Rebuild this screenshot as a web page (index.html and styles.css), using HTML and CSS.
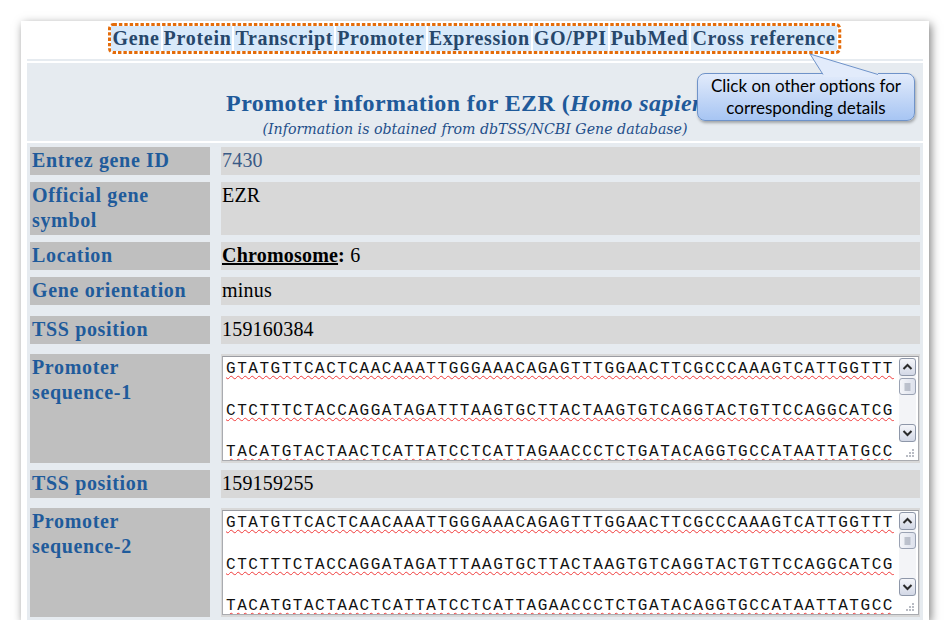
FILE: index.html
```html
<!DOCTYPE html>
<html>
<head>
<meta charset="utf-8">
<link rel="stylesheet" href="styles.css">
</head>
<body>
<div class="panel">
  <div class="navrow">
    <div class="nav">
      <svg class="nav-border" xmlns="http://www.w3.org/2000/svg"><rect rx="4" ry="4"></rect></svg>
      <a class="nav-link">Gene</a>
      <a class="nav-link">Protein</a>
      <a class="nav-link">Transcript</a>
      <a class="nav-link">Promoter</a>
      <a class="nav-link">Expression</a>
      <a class="nav-link">GO/PPI</a>
      <a class="nav-link">PubMed</a>
      <a class="nav-link">Cross reference</a>
    </div>
  </div>
  <div class="rule"></div>
  <div class="head">
    <h1 class="title">Promoter information for EZR (<i>Homo sapiens</i>)</h1>
    <p class="sub">(Information is obtained from dbTSS/NCBI Gene database)</p>
  </div>
  <div class="table">
    <div class="row">
      <div class="lab">Entrez gene ID</div>
      <div class="val val-link">7430</div>
    </div>
    <div class="row">
      <div class="lab">Official gene<br>symbol</div>
      <div class="val">EZR</div>
    </div>
    <div class="row">
      <div class="lab">Location</div>
      <div class="val"><b class="chrom">Chromosome</b><b>:</b> 6</div>
    </div>
    <div class="row">
      <div class="lab">Gene orientation</div>
      <div class="val">minus</div>
    </div>
    <div class="row row-gap11">
      <div class="lab">TSS position</div>
      <div class="val">159160384</div>
    </div>
    <div class="row row-gap10">
      <div class="lab">Promoter<br>sequence-1</div>
      <div class="val val-seq">
        <div class="ta">
          <div class="ta-text">
            <div class="ta-line">GTATGTTCACTCAACAAATTGGGAAACAGAGTTTGGAACTTCGCCCAAAGTCATTGGTTT</div>
            <div class="ta-line">CTCTTTCTACCAGGATAGATTTAAGTGCTTACTAAGTGTCAGGTACTGTTCCAGGCATCG</div>
            <div class="ta-line">TACATGTACTAACTCATTATCCTCATTAGAACCCTCTGATACAGGTGCCATAATTATGCC</div>
          </div>
          <div class="sb">
            <div class="sb-btn"><svg width="15" height="16" viewBox="0 0 15 16"><polyline points="3.5,10 7.5,6 11.5,10" fill="none" stroke="#2b2b2b" stroke-width="2"/></svg></div>
            <div class="sb-thumb"><svg width="15" height="15" viewBox="0 0 15 15"><path d="M4.5 5h6M4.5 7h6M4.5 9h6M4.5 11h6" stroke="#8e96a6" stroke-width="1"/></svg></div>
            <div class="sb-track"></div>
            <div class="sb-btn"><svg width="15" height="16" viewBox="0 0 15 16"><polyline points="3.5,6 7.5,10 11.5,6" fill="none" stroke="#2b2b2b" stroke-width="2"/></svg></div>
            <div class="sb-grip"><svg width="17" height="18" viewBox="0 0 17 18"><g fill="#b9bcc4"><rect x="13" y="6" width="2" height="2"/><rect x="10" y="9" width="2" height="2"/><rect x="13" y="9" width="2" height="2"/><rect x="7" y="12" width="2" height="2"/><rect x="10" y="12" width="2" height="2"/><rect x="13" y="12" width="2" height="2"/></g></svg></div>
          </div>
        </div>
      </div>
    </div>
    <div class="row">
      <div class="lab">TSS position</div>
      <div class="val">159159255</div>
    </div>
    <div class="row row-gap10">
      <div class="lab">Promoter<br>sequence-2</div>
      <div class="val val-seq">
        <div class="ta">
          <div class="ta-text">
            <div class="ta-line">GTATGTTCACTCAACAAATTGGGAAACAGAGTTTGGAACTTCGCCCAAAGTCATTGGTTT</div>
            <div class="ta-line">CTCTTTCTACCAGGATAGATTTAAGTGCTTACTAAGTGTCAGGTACTGTTCCAGGCATCG</div>
            <div class="ta-line">TACATGTACTAACTCATTATCCTCATTAGAACCCTCTGATACAGGTGCCATAATTATGCC</div>
          </div>
          <div class="sb">
            <div class="sb-btn"><svg width="15" height="16" viewBox="0 0 15 16"><polyline points="3.5,10 7.5,6 11.5,10" fill="none" stroke="#2b2b2b" stroke-width="2"/></svg></div>
            <div class="sb-thumb"><svg width="15" height="15" viewBox="0 0 15 15"><path d="M4.5 5h6M4.5 7h6M4.5 9h6M4.5 11h6" stroke="#8e96a6" stroke-width="1"/></svg></div>
            <div class="sb-track"></div>
            <div class="sb-btn"><svg width="15" height="16" viewBox="0 0 15 16"><polyline points="3.5,6 7.5,10 11.5,6" fill="none" stroke="#2b2b2b" stroke-width="2"/></svg></div>
            <div class="sb-grip"><svg width="17" height="18" viewBox="0 0 17 18"><g fill="#b9bcc4"><rect x="13" y="6" width="2" height="2"/><rect x="10" y="9" width="2" height="2"/><rect x="13" y="9" width="2" height="2"/><rect x="7" y="12" width="2" height="2"/><rect x="10" y="12" width="2" height="2"/><rect x="13" y="12" width="2" height="2"/></g></svg></div>
          </div>
        </div>
      </div>
    </div>
  </div>
  <div class="callout">
    <svg class="callout-tail" width="75" height="24" viewBox="0 0 75 24">
      <polygon points="2,1 15,21 70,21" fill="#e2ebfb"/>
      <rect x="15" y="20" width="55" height="4" fill="#e2ebfb"/>
      <polyline points="15,21.5 2,1 70,21.5" fill="none" stroke="#6f93c9" stroke-width="1"/>
    </svg>
    Click on other options for<br>corresponding details
  </div>
</div>
</body>
</html>
```
FILE: styles.css
```css
html, body {
  margin: 0;
  padding: 0;
  background: #ffffff;
}
body {
  font-family: "Liberation Serif", "Times New Roman", serif;
}
.panel {
  position: relative;
  margin: 21px 0 0 21px;
  width: 896px;
  height: 599px;
  padding: 0 6px;
  background: #ffffff;
  box-shadow: 2px 3px 9px rgba(0, 0, 0, 0.5);
  overflow: hidden;
  display: flex;
  flex-direction: column;
}
.navrow {
  height: 38px;
  flex: none;
  box-sizing: border-box;
  padding-top: 2px;
  display: flex;
  justify-content: center;
  align-items: flex-start;
}
.nav {
  position: relative;
  display: flex;
  gap: 2px;
  padding: 3px 5px 3px 3px;
}
.nav-border {
  position: absolute;
  left: 0;
  top: 0;
  width: 100%;
  height: 100%;
  overflow: visible;
}
.nav-border rect {
  x: 1.5px;
  y: 1.5px;
  width: calc(100% - 3px);
  height: calc(100% - 3px);
  fill: none;
  stroke: #e46c0a;
  stroke-width: 3;
  stroke-dasharray: 3.4 2;
}
.nav-link {
  position: relative;
  background: #d8e9fa;
  color: #27476b;
  font-weight: bold;
  font-size: 20px;
  letter-spacing: 0.7px;
  line-height: 25px;
  padding: 0 1px;
  text-decoration: none;
}
.rule {
  height: 2px;
  flex: none;
  background: #e6ebf0;
}
.head {
  flex: none;
  margin-top: 2px;
  height: 78px;
  box-sizing: border-box;
  padding-top: 26px;
  background: #e6ebf0;
  text-align: center;
}
.title {
  margin: 0;
  font-size: 24px;
  letter-spacing: 0.4px;
  line-height: 28px;
  font-weight: bold;
  color: #1f5a9a;
}
.sub {
  margin: 2px 0 0;
  font-family: "DejaVu Serif", serif;
  font-style: italic;
  font-size: 14.2px;
  line-height: 20px;
  color: #1f4f8a;
}
.table {
  flex: 1;
  margin-top: 2px;
  background: #e6ebf0;
  padding: 4px 3px 0;
}
.row {
  display: grid;
  grid-template-columns: 180px 1fr;
  column-gap: 11px;
  margin-top: 7px;
}
.row:first-child {
  margin-top: 0;
}
.row-gap11 {
  margin-top: 11px;
}
.row-gap10 {
  margin-top: 10px;
}
.lab {
  background: #bfbfbf;
  color: #1f5b9b;
  font-weight: bold;
  font-size: 20px;
  letter-spacing: 0.65px;
  line-height: 25px;
  padding: 1px 2px 2px;
  white-space: nowrap;
}
.val {
  background: #d8d8d8;
  color: #000;
  font-size: 20px;
  letter-spacing: 0.2px;
  line-height: 25px;
  padding: 1px 1px 2px;
}
.val-link {
  color: #3a5a86;
}
.chrom {
  text-decoration: underline;
}
.val-seq {
  padding: 2px 1px;
}
.ta {
  display: flex;
  height: 105px;
  box-sizing: border-box;
  border: 1px solid #a9abb0;
  border-top-color: #9a9ca2;
  background: #ffffff;
}
.ta-text {
  flex: 1;
  min-width: 0;
  overflow: hidden;
  padding: 2px 0 0 3px;
  display: flex;
  flex-direction: column;
  gap: 20.75px;
  font-family: "Liberation Mono", "Courier New", monospace;
  font-size: 16px;
  letter-spacing: 1.53px;
  line-height: 20.75px;
  color: #111;
  white-space: nowrap;
}
.ta-line {
  text-decoration: underline wavy #f03a3a;
  text-decoration-thickness: 1px;
  text-underline-offset: 2px;
  text-decoration-skip-ink: none;
}
.sb {
  width: 17px;
  margin: 1px 2px 0 0;
  display: flex;
  flex-direction: column;
  background: #f3f4f7;
}
.sb-btn {
  height: 18px;
  box-sizing: border-box;
  border: 1px solid #8e97a9;
  border-radius: 3px;
  background: linear-gradient(#f5f6fa, #d3d8e6);
  display: flex;
  align-items: center;
  justify-content: center;
}
.sb-thumb {
  margin-top: 2px;
  height: 17px;
  box-sizing: border-box;
  border: 1px solid #9aa2b3;
  border-radius: 3px;
  background: linear-gradient(90deg, #f4f5f9, #dde1ec);
  display: flex;
  align-items: center;
  justify-content: center;
}
.sb-track {
  flex: 1;
}
.sb-grip {
  height: 18px;
  background: #ffffff;
}
.callout {
  position: absolute;
  left: 676px;
  top: 52px;
  width: 218px;
  height: 48px;
  box-sizing: border-box;
  padding-top: 1px;
  border: 1px solid #6f93c9;
  border-radius: 8px;
  background: linear-gradient(#e2ebfb, #a7c5f3);
  box-shadow: 1px 2px 3px rgba(0, 0, 0, 0.3);
  font-family: Lato, "Liberation Sans", sans-serif;
  font-size: 17px;
  line-height: 22px;
  color: #000;
  text-align: center;
}
.callout-tail {
  position: absolute;
  left: 110px;
  top: -21px;
  overflow: visible;
}
```
